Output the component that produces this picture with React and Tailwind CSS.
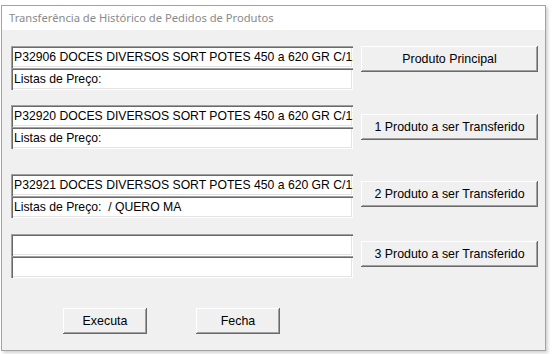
import React from 'react';

const rows = [
  {
    produto: 'P32906 DOCES DIVERSOS SORT POTES 450 a 620 GR C/12',
    listas: 'Listas de Preço:',
    botao: 'Produto Principal',
    top: 'mt-[16px]',
    btnTop: 'mt-0',
  },
  {
    produto: 'P32920 DOCES DIVERSOS SORT POTES 450 a 620 GR C/12',
    listas: 'Listas de Preço:',
    botao: '1 Produto a ser Transferido',
    top: 'mt-[15px]',
    btnTop: 'mt-[9px]',
  },
  {
    produto: 'P32921 DOCES DIVERSOS SORT POTES 450 a 620 GR C/12',
    listas: 'Listas de Preço:  / QUERO MA',
    botao: '2 Produto a ser Transferido',
    top: 'mt-[25px]',
    btnTop: 'mt-[7px]',
  },
  {
    produto: '',
    listas: '',
    botao: '3 Produto a ser Transferido',
    top: 'mt-[16px]',
    btnTop: 'mt-[7px]',
  },
];

// campo de texto com borda afundada (estilo Windows clássico)
const Campo = ({ value }) => (
  <div className="h-[22px] w-[342px] overflow-hidden whitespace-pre bg-white pl-[3px] pt-[2px] text-[12.2px] leading-[19px] text-black shadow-[inset_1px_1px_#a0a0a0,inset_2px_2px_#696969,inset_-1px_-1px_#ffffff,inset_-2px_-2px_#e3e3e3]">
    {value}
  </div>
);

const Botao = ({ children, className = '' }) => (
  <button
    type="button"
    className={`h-[26px] shrink-0 bg-[#f0f0f0] text-[12.4px] text-black shadow-[inset_-1px_-1px_#696969,inset_1px_1px_#ffffff,inset_-2px_-2px_#a0a0a0] ${className}`}
  >
    {children}
  </button>
);

const App = () => {
  return (
    <div className="h-[354px] w-[552px] bg-white pt-[5px] pl-[1px]" style={{ fontFamily: '"Liberation Sans", Arial, sans-serif' }}>
      <div className="flex h-[346px] w-[545px] flex-col border border-[#a3a3a3] bg-[#f0f0f0] shadow-[2px_2px_3px_rgba(0,0,0,0.18)]">
        <div className="h-[24px] shrink-0 bg-white pl-[7px] pt-[4px] text-[11.2px] leading-[15px] text-[#8a8a8a]" style={{ fontFamily: '"Noto Sans", sans-serif' }}>
          Transferência de Histórico de Pedidos de Produtos
        </div>
        <div className="flex flex-col pl-[9px]">
          {rows.map((r) => (
            <div key={r.botao} className={`flex gap-[8px] ${r.top}`}>
              <div className="flex flex-col">
                <Campo value={r.produto} />
                <Campo value={r.listas} />
              </div>
              <Botao className={`w-[177px] ${r.btnTop}`}>{r.botao}</Botao>
            </div>
          ))}
          <div className="mt-[30px] flex gap-[49px] pl-[52px]">
            <Botao className="w-[84px]">Executa</Botao>
            <Botao className="w-[84px]">Fecha</Botao>
          </div>
        </div>
      </div>
    </div>
  );
};

export default App;
